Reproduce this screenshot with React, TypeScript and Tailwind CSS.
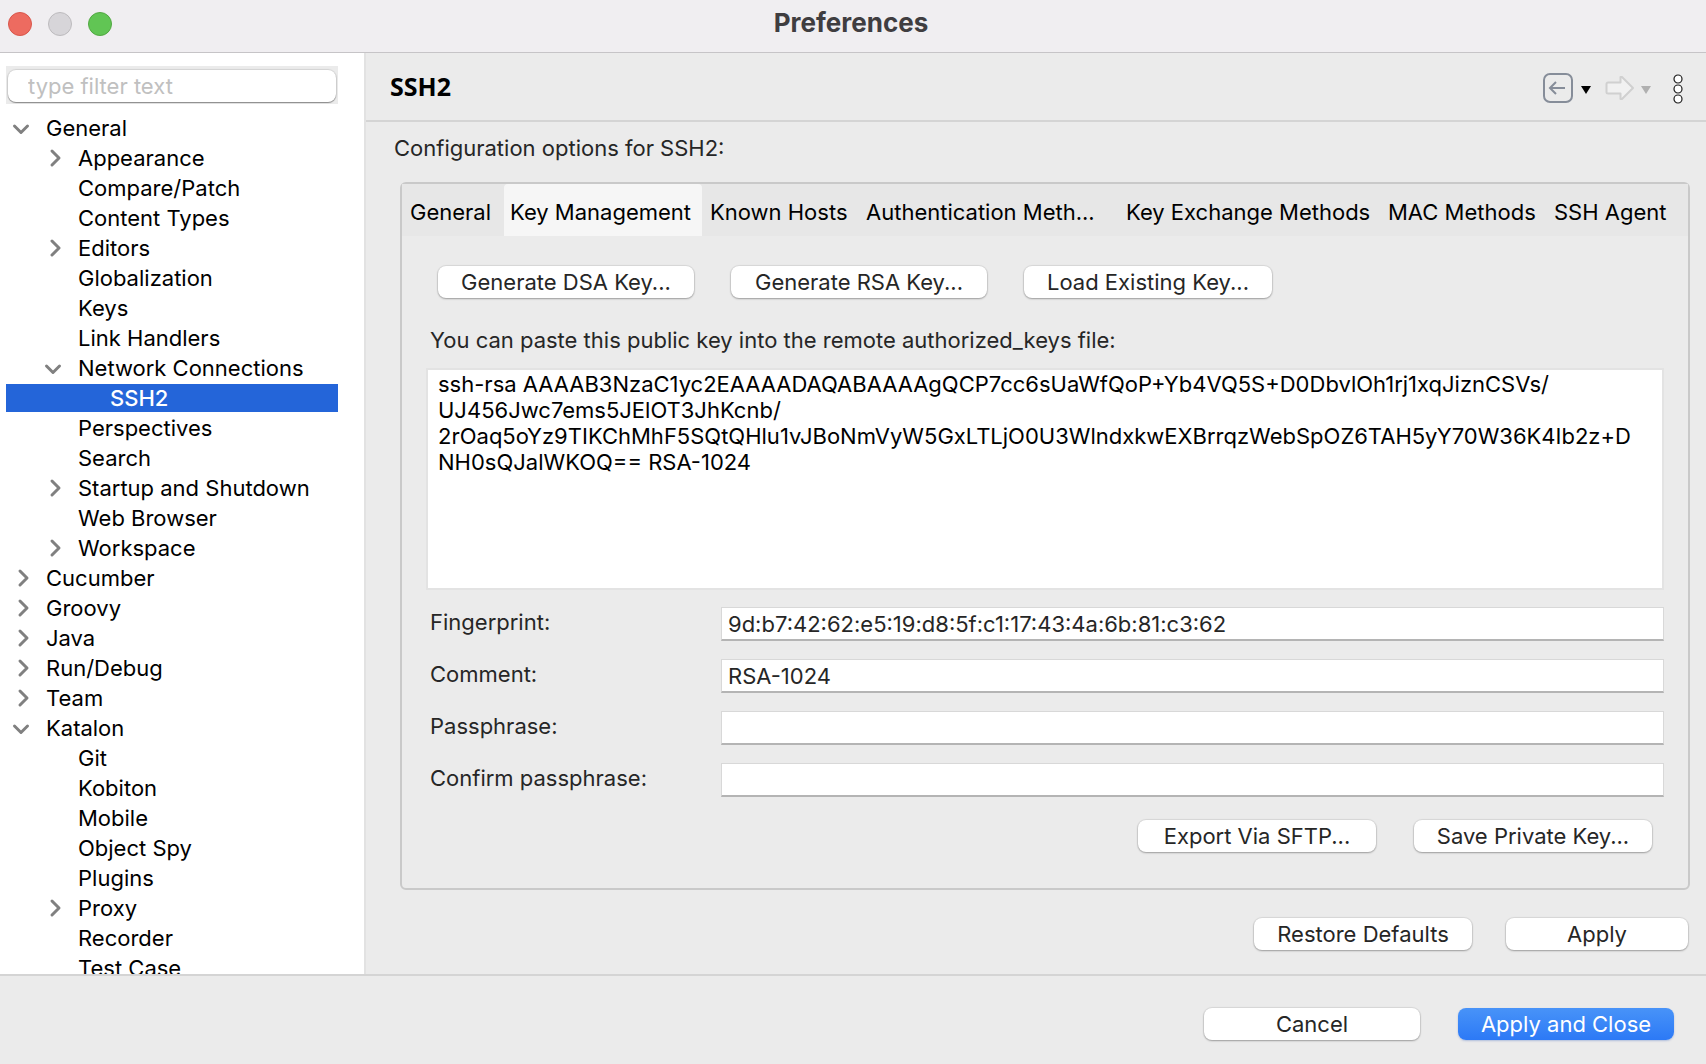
import { useState, type ReactNode } from "react";

type Arrow = "open" | "closed" | "none";
type Row = { label: string; level: 0 | 1 | 2; arrow: Arrow; selected?: boolean };

const rows: Row[] = [
  { label: "General", level: 0, arrow: "open" },
  { label: "Appearance", level: 1, arrow: "closed" },
  { label: "Compare/Patch", level: 1, arrow: "none" },
  { label: "Content Types", level: 1, arrow: "none" },
  { label: "Editors", level: 1, arrow: "closed" },
  { label: "Globalization", level: 1, arrow: "none" },
  { label: "Keys", level: 1, arrow: "none" },
  { label: "Link Handlers", level: 1, arrow: "none" },
  { label: "Network Connections", level: 1, arrow: "open" },
  { label: "SSH2", level: 2, arrow: "none", selected: true },
  { label: "Perspectives", level: 1, arrow: "none" },
  { label: "Search", level: 1, arrow: "none" },
  { label: "Startup and Shutdown", level: 1, arrow: "closed" },
  { label: "Web Browser", level: 1, arrow: "none" },
  { label: "Workspace", level: 1, arrow: "closed" },
  { label: "Cucumber", level: 0, arrow: "closed" },
  { label: "Groovy", level: 0, arrow: "closed" },
  { label: "Java", level: 0, arrow: "closed" },
  { label: "Run/Debug", level: 0, arrow: "closed" },
  { label: "Team", level: 0, arrow: "closed" },
  { label: "Katalon", level: 0, arrow: "open" },
  { label: "Git", level: 1, arrow: "none" },
  { label: "Kobiton", level: 1, arrow: "none" },
  { label: "Mobile", level: 1, arrow: "none" },
  { label: "Object Spy", level: 1, arrow: "none" },
  { label: "Plugins", level: 1, arrow: "none" },
  { label: "Proxy", level: 1, arrow: "closed" },
  { label: "Recorder", level: 1, arrow: "none" },
  { label: "Test Case", level: 1, arrow: "none" },
];

const indent = ["pl-[5px]", "pl-[37px]", "pl-[69px]"];

const tabs = [
  { label: "General", width: "w-[102px]" },
  { label: "Key Management", width: "w-[198px]" },
  { label: "Known Hosts", width: "w-[156px]" },
  { label: "Authentication Meth...", width: "w-[260px]" },
  { label: "Key Exchange Methods", width: "w-[262px]" },
  { label: "MAC Methods", width: "w-[166px]" },
  { label: "SSH Agent", width: "w-[132px]" },
];

const publicKey = [
  "ssh-rsa AAAAB3NzaC1yc2EAAAADAQABAAAAgQCP7cc6sUaWfQoP+Yb4VQ5S+D0DbvlOh1rj1xqJiznCSVs/",
  "UJ456Jwc7ems5JElOT3JhKcnb/",
  "2rOaq5oYz9TIKChMhF5SQtQHlu1vJBoNmVyW5GxLTLjO0U3WlndxkwEXBrrqzWebSpOZ6TAH5yY70W36K4Ib2z+D",
  "NH0sQJalWKOQ== RSA-1024",
].join("\n");

function Chevron({ open }: { open: boolean }) {
  return (
    <svg viewBox="0 0 20 20" className="size-5" fill="none" stroke="#808080" strokeWidth="3" strokeLinecap="round" strokeLinejoin="round" aria-hidden="true">
      <path d={open ? "M3.500 8l6.500 6.500 6.500-6.500" : "M9 3l7 7-7 7"} />
    </svg>
  );
}

function PushButton({ children, className, primary = false }: { children: ReactNode; className: string; primary?: boolean }) {
  return (
    <button
      type="button"
      className={`h-8 shrink-0 rounded-lg whitespace-nowrap ${
        primary
          ? "bg-linear-to-b from-[#4893f8] to-[#2c79f6] text-white shadow-[0_1px_2px_rgba(0,60,180,0.25)]"
          : "bg-white text-[#262626] shadow-[0_0_1px_1px_rgba(0,0,0,0.08),0_1px_2px_rgba(0,0,0,0.28)]"
      } ${className}`}
    >
      {children}
    </button>
  );
}

function Field({ id, label, value = "", type = "text" }: { id: string; label: string; value?: string; type?: string }) {
  return (
    <div className="flex h-[34px] items-center">
      <label htmlFor={id} className="w-[295px] shrink-0 pb-1 pl-1">
        {label}
      </label>
      <input
        id={id}
        type={type}
        defaultValue={value}
        className="h-[34px] min-w-0 flex-1 border border-b-2 border-[#d8d8d8] border-b-[#b4b4b4] bg-white px-1.5 outline-none"
      />
    </div>
  );
}

export default function App() {
  const [active, setActive] = useState("Key Management");

  return (
    <div className="flex h-screen flex-col overflow-hidden bg-[#ebebeb] font-['Inter',sans-serif] text-[22px] leading-[26px] text-[#262626]">
      <header className="grid h-[53px] shrink-0 grid-cols-[1fr_auto_1fr] items-center border-b border-[#c6c4c7] bg-[#f0eef1] px-2 pb-1">
        <div className="flex gap-4">
          <button type="button" aria-label="Close" className="size-6 rounded-full border border-[#d9564b] bg-[#ed6b60]" />
          <button type="button" aria-label="Minimize" className="size-6 rounded-full border border-[#bdbbbe] bg-[#d7d5d9]" />
          <button type="button" aria-label="Zoom" className="size-6 rounded-full border border-[#52a842] bg-[#61c554]" />
        </div>
        <h1 className="pr-1 pb-0.5 text-[26px] font-bold text-[#3f3d40]">Preferences</h1>
      </header>

      <div className="flex min-h-0 flex-1">
        <aside className="flex w-[366px] shrink-0 flex-col overflow-hidden border-r-2 border-[#e2e2e2] bg-white pt-[13px] pr-[26px] pl-1.5 text-black">
          <div className="mb-[9px] shrink-0 bg-[#ebebeb] px-0.5 pt-1 pb-0.5">
            <input
              type="text"
              aria-label="Filter"
              placeholder="type filter text"
              className="block h-8 w-full rounded-lg bg-white px-5 shadow-[0_0_1px_1px_rgba(0,0,0,0.1),0_1px_1px_rgba(0,0,0,0.35)] outline-none placeholder:text-[#c0c0c0]"
            />
          </div>
          <ul>
            {rows.map((row) => (
              <li key={row.label} className="py-px">
                <button
                  type="button"
                  className={`flex h-7 w-full items-center gap-[15px] text-left whitespace-nowrap ${indent[row.level]} ${
                    row.selected ? "bg-[#2465d9] font-medium text-white" : ""
                  }`}
                >
                  <span className="size-5 shrink-0">{row.arrow !== "none" && <Chevron open={row.arrow === "open"} />}</span>
                  {row.label}
                </button>
              </li>
            ))}
          </ul>
        </aside>

        <main className="flex min-w-0 flex-1 flex-col">
          <div className="flex h-[69px] shrink-0 items-center justify-between border-b-2 border-[#d4d4d4] pr-[23px] pl-6">
            <h2 className="pb-0.5 font-['Open_Sans',sans-serif] text-[25px] font-bold text-black">SSH2</h2>
            <div className="flex items-center pt-0.5">
              <button type="button" aria-label="Back">
                <svg viewBox="0 0 30 30" className="size-[30px]" fill="none" stroke="#868d99" strokeWidth="2">
                  <rect x="1" y="1" width="28" height="28" rx="6" />
                  <path d="M22 15H7.500M13 9l-6 6 6 6" />
                </svg>
              </button>
              <button type="button" aria-label="Back history" className="ml-2">
                <svg viewBox="0 0 10 8" className="mt-1 h-2 w-2.5" fill="#000">
                  <path d="M0 0h10L5 8z" />
                </svg>
              </button>
              <button type="button" aria-label="Forward" className="ml-3.5">
                <svg viewBox="0 0 30 26" className="h-[26px] w-[30px]" fill="#f1f1f1" stroke="#d0d0d0" strokeWidth="2" strokeLinejoin="round">
                  <path d="M3 7.500h12.500V2h1.500l11 11-11 11h-1.500v-5.500H3a1.500 1.500 0 0 1-1.500-1.500V9A1.500 1.500 0 0 1 3 7.500z" />
                </svg>
              </button>
              <button type="button" aria-label="Forward history" className="ml-1.5">
                <svg viewBox="0 0 10 8" className="mt-1 h-2 w-2.5" fill="#b0b0b0">
                  <path d="M0 0h10L5 8z" />
                </svg>
              </button>
              <button type="button" aria-label="View menu" className="ml-[22px] pt-0.5">
                <svg viewBox="0 0 10 30" className="h-[30px] w-2.5" fill="#fff" stroke="#1c1c1c" strokeWidth="1.2">
                  <circle cx="5" cy="5" r="4" />
                  <circle cx="5" cy="15" r="4" />
                  <circle cx="5" cy="25" r="4" />
                </svg>
              </button>
            </div>
          </div>

          <div className="flex min-h-0 flex-1 flex-col pt-[13px] pr-4 pl-[34px]">
            <p className="-ml-1.5 shrink-0">Configuration options for SSH2:</p>

            <section className="mt-[21px] flex shrink-0 flex-col rounded-md border-2 border-[#c9c9c9]">
              <div role="tablist" className="flex h-[52px] bg-[#e7e7e7] text-black">
                {tabs.map((tab) => (
                  <button
                    key={tab.label}
                    type="button"
                    role="tab"
                    aria-selected={active === tab.label}
                    onClick={() => setActive(tab.label)}
                    className={`pt-1 text-left whitespace-nowrap ${tab.width} ${active === tab.label ? "rounded-t bg-[#f6f6f6] pl-1.5" : "pl-2"}`}
                  >
                    {tab.label}
                  </button>
                ))}
              </div>

              <div role="tabpanel" className="flex flex-col px-6 pt-[30px] pb-9">
                <div className="flex gap-[37px] px-3">
                  <PushButton className="w-64">Generate DSA Key...</PushButton>
                  <PushButton className="w-64">Generate RSA Key...</PushButton>
                  <PushButton className="w-[248px]">Load Existing Key...</PushButton>
                </div>
                <label htmlFor="public-key" className="mt-[29px] pl-1">
                  You can paste this public key into the remote authorized_keys file:
                </label>
                <textarea
                  id="public-key"
                  defaultValue={publicKey}
                  wrap="off"
                  className="mt-[15px] block h-[222px] w-full resize-none overflow-hidden border-2 border-[#e3e3e3] bg-white px-2.5 py-px text-black outline-none"
                />
                <div className="mt-[17px] flex flex-col gap-[18px]">
                  <Field id="fingerprint" label="Fingerprint:" value="9d:b7:42:62:e5:19:d8:5f:c1:17:43:4a:6b:81:c3:62" />
                  <Field id="comment" label="Comment:" value="RSA-1024" />
                  <Field id="passphrase" label="Passphrase:" type="password" />
                  <Field id="confirm" label="Confirm passphrase:" type="password" />
                </div>
                <div className="mt-[23px] flex justify-end gap-[38px] pr-3">
                  <PushButton className="w-[238px]">Export Via SFTP...</PushButton>
                  <PushButton className="w-[238px]">Save Private Key...</PushButton>
                </div>
              </div>
            </section>

            <div className="mt-7 flex justify-end gap-[34px] pr-0.5">
              <PushButton className="w-[218px]">Restore Defaults</PushButton>
              <PushButton className="w-[182px]">Apply</PushButton>
            </div>
          </div>
        </main>
      </div>

      <footer className="flex h-[90px] shrink-0 justify-end gap-[38px] border-t-2 border-[#d4d4d4] pt-8 pr-8">
        <PushButton className="w-[216px]">Cancel</PushButton>
        <PushButton primary className="w-[216px]">
          Apply and Close
        </PushButton>
      </footer>
    </div>
  );
}
